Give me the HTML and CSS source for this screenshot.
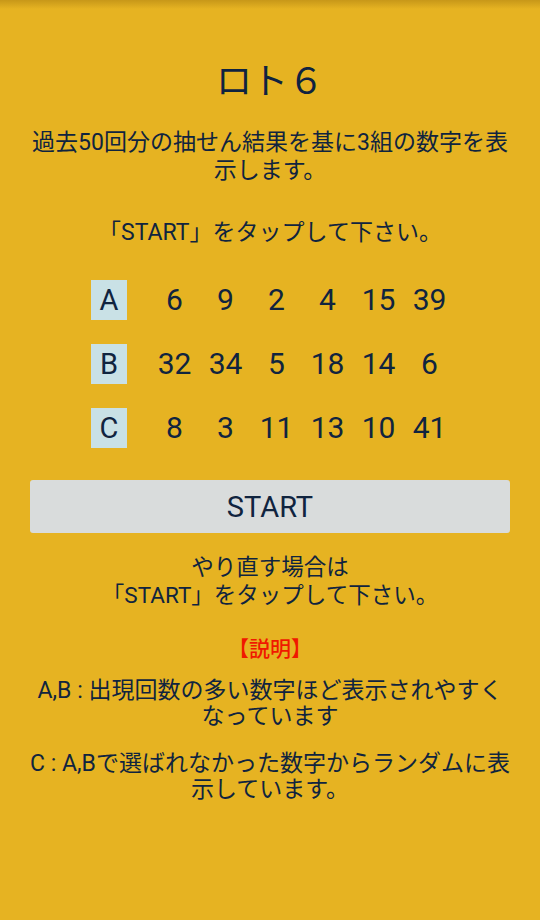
FILE: index.html
```html
<!DOCTYPE html>
<html lang="ja">
<head>
<meta charset="utf-8">
<title>ロト6</title>
<link rel="stylesheet" href="styles.css">
</head>
<body>
<main class="screen">
  <h1 class="title">ロト６</h1>
  <p class="desc">過去50回分の抽せん結果を基に3組の数字を表<br>示します。</p>
  <p class="tap">「START」をタップして下さい。</p>

  <div class="sets">
    <div class="row">
      <span class="label">A</span>
      <span class="num">6</span><span class="num">9</span><span class="num">2</span><span class="num">4</span><span class="num">15</span><span class="num">39</span>
    </div>
    <div class="row">
      <span class="label">B</span>
      <span class="num">32</span><span class="num">34</span><span class="num">5</span><span class="num">18</span><span class="num">14</span><span class="num">6</span>
    </div>
    <div class="row">
      <span class="label">C</span>
      <span class="num">8</span><span class="num">3</span><span class="num">11</span><span class="num">13</span><span class="num">10</span><span class="num">41</span>
    </div>
  </div>

  <button class="start" type="button">START</button>

  <p class="retry">やり直す場合は<br>「START」をタップして下さい。</p>

  <p class="heading">【説明】</p>
  <p class="note note-ab">A,B : 出現回数の多い数字ほど表示されやすく<br>なっています</p>
  <p class="note note-c">C : A,Bで選ばれなかった数字からランダムに表<br>示しています。</p>
</main>
</body>
</html>
```

FILE: styles.css
```css
html, body {
  margin: 0;
  padding: 0;
}
body {
  width: 540px;
  height: 920px;
  background: #e6b322;
  background-image: linear-gradient(to bottom, rgba(120, 80, 0, 0.28), rgba(120, 80, 0, 0) 9px);
  background-repeat: no-repeat;
  color: #10243f;
  font-family: Roboto, "Noto Sans CJK JP", sans-serif;
  overflow: hidden;
}
.screen {
  display: flex;
  flex-direction: column;
  align-items: stretch;
  padding: 54px 30px 0;
  text-align: center;
}
p, h1 {
  margin: 0;
}
.title {
  font-family: "Noto Sans CJK JP", sans-serif;
  font-size: 36px;
  font-weight: 400;
  line-height: 48px;
  color: #0f2340;
}
.desc {
  margin-top: 27px;
  font-size: 23px;
  line-height: 28px;
}
.tap {
  margin-top: 34px;
  font-size: 23px;
  line-height: 28px;
}
.sets {
  margin-top: 33px;
  display: flex;
  flex-direction: column;
  align-items: center;
  gap: 24px;
  padding-left: 6px;
}
.row {
  display: flex;
  height: 40px;
}
.label {
  width: 36px;
  margin-right: 22px;
  background: #c9e1e6;
  font-size: 29px;
  line-height: 40px;
  text-align: center;
}
.num {
  width: 51px;
  font-size: 30px;
  line-height: 40px;
  text-align: center;
}
.start {
  margin-top: 32px;
  height: 53px;
  border: none;
  border-radius: 3px;
  background: #d9dcdc;
  color: #10243f;
  font-family: Roboto, sans-serif;
  font-size: 29px;
  padding: 0;
}
.retry {
  margin-top: 20px;
  font-size: 22.5px;
  line-height: 28px;
}
.heading {
  margin-top: 26px;
  font-size: 21px;
  font-weight: 500;
  line-height: 28px;
  color: #f01800;
}
.note {
  font-size: 23px;
  line-height: 26px;
  white-space: nowrap;
}
.note-ab {
  margin-top: 15px;
}
.note-c {
  margin-top: 21px;
}
```
